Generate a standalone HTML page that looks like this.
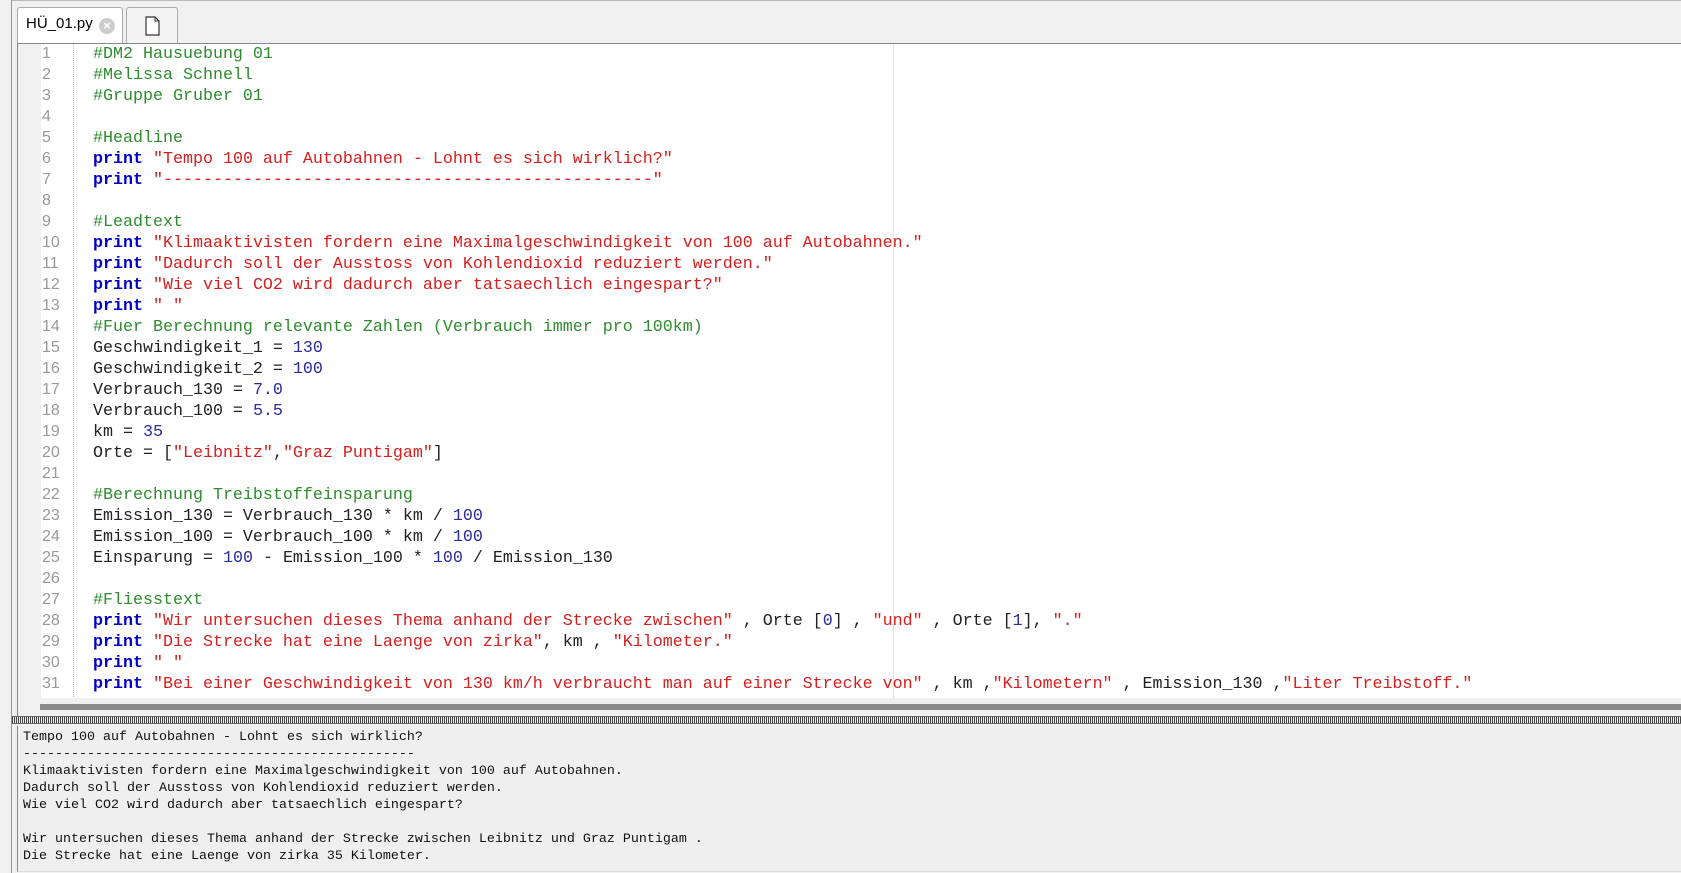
<!DOCTYPE html>
<html><head><meta charset="utf-8"><style>
html,body{margin:0;padding:0;width:1681px;height:873px;overflow:hidden;background:#f0f0f0;font-family:"Liberation Sans",sans-serif;}
.lb{position:absolute;left:11px;top:0;width:1px;height:873px;background:#999;}
.tabbar{position:absolute;left:12px;top:0;width:1669px;height:43px;background:#f0f0f0;border-top:1px solid #bbb;}
.tab1{position:absolute;left:17px;top:7px;width:104px;height:36px;background:#fff;border:1px solid #aaa;border-bottom:none;border-radius:3px 3px 0 0;}
.tab1 span{position:absolute;left:8px;top:7px;font-size:15px;color:#000;}
.tab1 .x{position:absolute;left:81px;top:10px;width:16px;height:16px;border-radius:50%;background:#ccc;color:#fff;font-size:13px;line-height:16px;text-align:center;font-weight:bold;}
.tab2{position:absolute;left:126px;top:7px;width:50px;height:35px;background:#f4f4f4;border:1px solid #aaa;border-bottom:none;border-radius:3px 3px 0 0;}
.editor{position:absolute;left:17px;top:43px;width:1664px;height:655px;background:#fff;border-top:1px solid #888;border-left:1px solid #888;}
.gut{position:absolute;left:0;top:0;width:23px;height:655px;background:#f0f0f0;}
.dots{position:absolute;left:55px;top:0;height:655px;border-left:1px dotted #bbb;}
.ruler{position:absolute;left:875px;top:0;height:655px;border-left:1px solid #e4e4e4;}
.nums{position:absolute;left:24px;top:-1px;font-family:"Liberation Sans",sans-serif;font-size:16px;color:#999;line-height:21px;}
.code{position:absolute;left:75px;top:0;font-family:"Liberation Mono",monospace;font-size:16.67px;line-height:21px;white-space:pre;color:#222;}
.c{color:#2e8b2e}.k{color:#0000c8;font-weight:bold}.s{color:#d42020}.n{color:#2b2b99}
.hscroll{position:absolute;left:17px;top:698px;width:1664px;height:19px;background:#f0f0f0;border-left:1px solid #888;}
.hscroll div{position:absolute;left:22px;top:6px;width:1642px;height:6px;background:#8a8a8a;}
.sep{position:absolute;left:12px;top:716px;width:1669px;height:6px;border-top:1px solid #666;border-bottom:1px solid #666;background:repeating-linear-gradient(90deg,#444 0 1px,#eee 1px 2px);}
.out{position:absolute;left:17px;top:726px;width:1664px;height:145px;background:#efefef;border-left:1px solid #888;border-bottom:1px solid #ddd;font-family:"Liberation Mono",monospace;font-size:13.33px;line-height:17px;white-space:pre;color:#111;}
.out div{position:absolute;left:5px;top:3px;}
</style></head><body>
<div class="lb"></div>
<div class="tabbar"></div>
<div class="tab1"><span>HÜ_01.py</span><div class="x">×</div></div>
<div class="tab2"><svg width="50" height="35"><path d="M19 9h9l4 4v14H19z" fill="#fff" stroke="#333" stroke-width="1.2"/><path d="M28 9v4h4" fill="none" stroke="#333" stroke-width="1"/></svg></div>
<div class="editor">
<div class="gut"></div><div class="dots"></div><div class="ruler"></div>
<div class="nums">1<br>2<br>3<br>4<br>5<br>6<br>7<br>8<br>9<br>10<br>11<br>12<br>13<br>14<br>15<br>16<br>17<br>18<br>19<br>20<br>21<br>22<br>23<br>24<br>25<br>26<br>27<br>28<br>29<br>30<br>31</div>
<div class="code"><span class="c">#DM2 Hausuebung 01</span>
<span class="c">#Melissa Schnell</span>
<span class="c">#Gruppe Gruber 01</span>

<span class="c">#Headline</span>
<span class="k">print</span> <span class="s">"Tempo 100 auf Autobahnen - Lohnt es sich wirklich?"</span>
<span class="k">print</span> <span class="s">"-------------------------------------------------"</span>

<span class="c">#Leadtext</span>
<span class="k">print</span> <span class="s">"Klimaaktivisten fordern eine Maximalgeschwindigkeit von 100 auf Autobahnen."</span>
<span class="k">print</span> <span class="s">"Dadurch soll der Ausstoss von Kohlendioxid reduziert werden."</span>
<span class="k">print</span> <span class="s">"Wie viel CO2 wird dadurch aber tatsaechlich eingespart?"</span>
<span class="k">print</span> <span class="s">" "</span>
<span class="c">#Fuer Berechnung relevante Zahlen (Verbrauch immer pro 100km)</span>
Geschwindigkeit_1 = <span class="n">130</span>
Geschwindigkeit_2 = <span class="n">100</span>
Verbrauch_130 = <span class="n">7.0</span>
Verbrauch_100 = <span class="n">5.5</span>
km = <span class="n">35</span>
Orte = [<span class="s">"Leibnitz"</span>,<span class="s">"Graz Puntigam"</span>]

<span class="c">#Berechnung Treibstoffeinsparung</span>
Emission_130 = Verbrauch_130 * km / <span class="n">100</span>
Emission_100 = Verbrauch_100 * km / <span class="n">100</span>
Einsparung = <span class="n">100</span> - Emission_100 * <span class="n">100</span> / Emission_130

<span class="c">#Fliesstext</span>
<span class="k">print</span> <span class="s">"Wir untersuchen dieses Thema anhand der Strecke zwischen"</span> , Orte [<span class="n">0</span>] , <span class="s">"und"</span> , Orte [<span class="n">1</span>], <span class="s">"."</span>
<span class="k">print</span> <span class="s">"Die Strecke hat eine Laenge von zirka"</span>, km , <span class="s">"Kilometer."</span>
<span class="k">print</span> <span class="s">" "</span>
<span class="k">print</span> <span class="s">"Bei einer Geschwindigkeit von 130 km/h verbraucht man auf einer Strecke von"</span> , km ,<span class="s">"Kilometern"</span> , Emission_130 ,<span class="s">"Liter Treibstoff."</span></div>
</div>
<div class="hscroll"><div></div></div>
<div class="sep"></div>
<div class="out"><div>Tempo 100 auf Autobahnen - Lohnt es sich wirklich?
-------------------------------------------------
Klimaaktivisten fordern eine Maximalgeschwindigkeit von 100 auf Autobahnen.
Dadurch soll der Ausstoss von Kohlendioxid reduziert werden.
Wie viel CO2 wird dadurch aber tatsaechlich eingespart?

Wir untersuchen dieses Thema anhand der Strecke zwischen Leibnitz und Graz Puntigam .
Die Strecke hat eine Laenge von zirka 35 Kilometer.</div></div>
</body></html>
